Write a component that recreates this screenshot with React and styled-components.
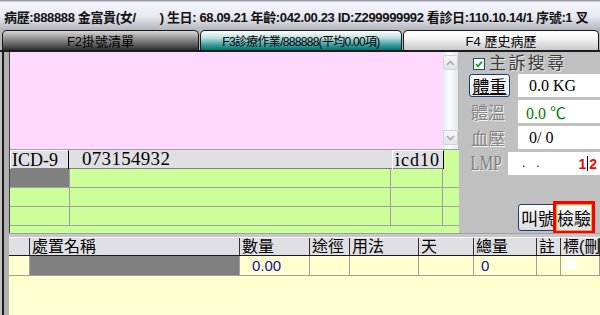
import React from 'react';
import styled, { createGlobalStyle } from 'styled-components';

const SANS = `"Liberation Sans", "Noto Sans CJK TC", sans-serif`;
const SERIF = `"Liberation Serif", "Noto Sans CJK TC", serif`;

const GlobalStyle = createGlobalStyle`
  html, body { margin: 0; padding: 0; background: #c0c0c0; }
  body { width: 600px; height: 315px; overflow: hidden; }
`;

const Page = styled.div`
  width: 600px;
  height: 315px;
  overflow: hidden;
  display: flex;
  flex-direction: column;
  background: #c0c0c0;
  font-family: ${SANS};
`;

const InfoBar = styled.div`
  height: 30px;
  flex: none;
  box-sizing: border-box;
  padding: 2px 0 0 4px;
  display: flex;
  align-items: center;
  background: linear-gradient(#9c9ca6 0, #9c9ca6 1px, #f6f6fe 2px, #e8e8f0 55%, #b4b4bc 100%);
  font-weight: bold;
  font-size: 13px;
  letter-spacing: -0.35px;
  color: #111;
  white-space: nowrap;
  overflow: hidden;
`;

const InfoGap = styled.span`
  display: inline-block;
  width: ${(p) => p.$w}px;
`;

const TabRow = styled.div`
  height: 20px;
  flex: none;
  display: flex;
  align-items: flex-end;
  padding-left: 2px;
  gap: 1px;
  background: #b8b8bc;
`;

const tabBg = {
  dark: 'linear-gradient(#d8d8d8 0%, #9a9a9a 35%, #5a5a5a 75%, #2c2c2c 100%)',
  active: 'linear-gradient(#ffffff 0%, #bfe0e0 35%, #3a9a9a 75%, #007070 100%)',
  light: 'linear-gradient(#ffffff 0%, #f4f4f4 40%, #c8c8c8 100%)',
};

const Tab = styled.div`
  width: ${(p) => p.$w}px;
  height: 20px;
  flex: none;
  box-sizing: border-box;
  display: flex;
  align-items: center;
  justify-content: center;
  font-size: ${(p) => (p.$variant === 'active' ? 12 : 13)}px;
  letter-spacing: ${(p) => (p.$variant === 'active' ? -0.7 : 0)}px;
  color: #000;
  white-space: nowrap;
  overflow: hidden;
  border: 1px solid #1a1a1a;
  border-bottom: none;
  border-radius: 5px 5px 0 0;
  background: ${(p) => tabBg[p.$variant]};
`;

const Workspace = styled.div`
  height: 183px;
  flex: none;
  box-sizing: border-box;
  border-top: 2px solid #1c1c1c;
  display: flex;
`;

const FramePane = styled.div`
  width: ${(p) => p.$w || 'auto'};
  flex: ${(p) => (p.$w ? 'none' : '1')};
  box-sizing: border-box;
  margin-left: 2px;
  border-left: 2px solid #1a1a1a;
  padding-left: 5px;
  background: #b0b0b0;
  display: flex;
`;

const LeftInner = styled.div`
  flex: 1;
  border-left: 1px solid #404040;
  display: flex;
  flex-direction: column;
  background: #ccff99;
  min-width: 0;
`;

const NotesArea = styled.div`
  height: 97px;
  flex: none;
  display: flex;
  border-bottom: 1px solid #a0a0a0;
`;

const PinkMemo = styled.div`
  flex: 1;
  background: #ffd8ff;
`;

const ScrollTrack = styled.div`
  width: 17px;
  flex: none;
  box-sizing: border-box;
  border-right: 1px solid #b8b8c0;
  background: linear-gradient(90deg, #e4e6ec, #fbfbfd 45%, #e6e8ee);
  display: flex;
  flex-direction: column;
  justify-content: space-between;
  align-items: center;
  padding: 3px 0 4px;
`;

const ScrollBtn = styled.div`
  width: 15px;
  height: 15px;
  box-sizing: border-box;
  border: 1px solid #d2d2da;
  border-radius: 2px;
  background: linear-gradient(#f6f6f8, #e4e4e8);
  display: flex;
  align-items: center;
  justify-content: center;
`;

const IcdHeader = styled.div`
  height: 19px;
  flex: none;
  box-sizing: border-box;
  border-bottom: 1px solid #808080;
  display: grid;
  grid-template-columns: 59px 1fr 52px 15px;
  background: #e0e0e4;
  font-family: ${SERIF};
  font-size: 18px;
  line-height: 18px;
  color: #000;
`;

const IcdBox = styled.div`
  box-sizing: border-box;
  border-top: 1px solid #fff;
  border-left: 1px solid #fff;
  border-right: 1px solid #000;
  border-bottom: 1px solid #000;
  padding-left: ${(p) => p.$pad || 1}px;
  letter-spacing: ${(p) => p.$ls || 0}px;
  white-space: nowrap;
`;

const IcdCode = styled.div`
  padding-left: 13px;
  font-size: 19px;
  letter-spacing: 0.3px;
`;

const IcdGap = styled.div`
  background: #ccff99;
`;

const DiagRow = styled.div`
  height: 19px;
  flex: none;
  display: grid;
  grid-template-columns: 60px 321px 52px 1fr;
`;

const DiagCell = styled.div`
  box-sizing: border-box;
  border-bottom: 1px solid #a0a0a0;
  border-right: ${(p) => (p.$last ? 'none' : '1px solid #a0a0a0')};
  background: ${(p) => (p.$selected ? '#808080' : '#ccff99')};
`;

const SidePanel = styled.div`
  flex: 1;
  background: #c0c0c0;
  display: flex;
  flex-direction: column;
  padding: 4px 0 0 10px;
  min-width: 0;
`;

const CheckRow = styled.div`
  height: 15px;
  display: flex;
  align-items: center;
  margin-left: 4px;
  gap: 4px;
`;

const CheckText = styled.span`
  font-family: ${SERIF};
  font-size: 17px;
  letter-spacing: 2.4px;
  color: #3a3a3a;
  text-shadow: 1px 1px 0 #e8e8e8;
  line-height: 15px;
`;

const FieldRow = styled.div`
  height: 23px;
  flex: none;
  display: flex;
  margin-top: 3px;
`;

const LabelCell = styled.div`
  width: ${(p) => p.$w}px;
  flex: none;
  display: flex;
  align-items: center;
`;

const WeightButton = styled.div`
  width: 41px;
  height: 23px;
  box-sizing: border-box;
  border: 1px solid #1c3c78;
  border-radius: 3px;
  background: linear-gradient(#ffffff, #e6e6ea);
  display: flex;
  align-items: center;
  justify-content: center;
  font-size: 17px;
  color: #000;
  text-decoration: underline;
  text-underline-offset: 1px;
`;

const FieldLabel = styled.span`
  display: inline-block;
  font-family: ${SERIF};
  font-size: ${(p) => p.$size || 17}px;
  color: ${(p) => p.$color || '#858585'};
  text-shadow: 1px 1px 0 #f4f4f4;
  padding-left: 2px;
  transform: scaleX(${(p) => p.$sx || 1});
  transform-origin: left center;
`;

const InputBox = styled.div`
  flex: 1;
  background: #fff;
  display: flex;
  align-items: center;
  justify-content: ${(p) => (p.$split ? 'space-between' : 'flex-start')};
  padding-left: ${(p) => p.$pad || 10}px;
  padding-right: 3px;
  font-family: ${SERIF};
  font-size: 16px;
  color: ${(p) => p.$color || '#000'};
  white-space: nowrap;
`;

const Dots = styled.span`
  font-family: ${SANS};
  font-size: 12px;
  letter-spacing: 11px;
  align-self: flex-end;
  padding-bottom: 5px;
`;

const DateTail = styled.span`
  display: flex;
  align-items: center;
  font-family: ${SANS};
  font-weight: bold;
  font-size: 14px;
  color: #ff0000;
`;

const Caret = styled.span`
  width: 1px;
  height: 15px;
  background: #000;
  margin: 0 1px 0 1px;
`;

const ButtonRow = styled.div`
  margin-top: auto;
  height: 33px;
  display: flex;
  align-items: center;
  justify-content: flex-end;
  padding-right: 5px;
  margin-bottom: -1px;
`;

const CallButton = styled.div`
  width: 39px;
  height: 27px;
  box-sizing: border-box;
  border: 1px solid #1c3c78;
  border-radius: 3px;
  background: linear-gradient(#ffffff, #dcdce0);
  display: flex;
  align-items: center;
  padding-left: 2px;
  font-size: 17px;
  color: #000;
  overflow: hidden;
  white-space: nowrap;
`;

const ExamButton = styled.div`
  width: 42px;
  height: 33px;
  box-sizing: border-box;
  border: 3px solid #ff0000;
  margin-left: -4px;
  display: flex;
`;

const ExamInner = styled.div`
  flex: 1;
  box-sizing: border-box;
  border: 1px solid #f0a830;
  background: linear-gradient(#ffffff, #e2e2e6);
  display: flex;
  align-items: center;
  justify-content: center;
  font-size: 17px;
  color: #000;
  white-space: nowrap;
  overflow: hidden;
`;

const OrderPane = styled.div`
  flex: 1;
  display: flex;
  flex-direction: column;
  border-top: 1px solid #a0a0a0;
  padding-top: 3px;
  background: #c8c8cc;
  min-width: 0;
`;

const COLS = '21px 210px 70px 40px 69px 55px 63px 24px 1fr';

const OrderHeader = styled.div`
  height: 19px;
  flex: none;
  box-sizing: border-box;
  display: grid;
  grid-template-columns: ${COLS};
  background: #e0e0e4;
  border-top: 1px solid #f8f8f8;
  border-bottom: 1px solid #1a1a1a;
`;

const HeadCell = styled.div`
  box-sizing: border-box;
  border-right: 1px solid #303030;
  padding-left: 2px;
  font-size: 16px;
  line-height: 18px;
  color: #000;
  white-space: nowrap;
  overflow: hidden;
`;

const OrderBody = styled.div`
  flex: 1;
  background: #ffffd0;
`;

const OrderRow = styled.div`
  height: 20px;
  display: grid;
  grid-template-columns: ${COLS};
`;

const DataCell = styled.div`
  box-sizing: border-box;
  border-right: 1px solid #a0a0a0;
  border-bottom: 1px solid #a0a0a0;
  background: ${(p) => (p.$selected ? '#808080' : 'transparent')};
  padding-left: ${(p) => p.$pad || 0}px;
  font-size: 15px;
  line-height: 19px;
  color: #1010a0;
  white-space: nowrap;
`;

const MarkBox = styled.div`
  width: 11px;
  height: 12px;
  margin: 1px 0 0 4px;
  background: #fff;
`;

const Chevron = ({ up }) => (
  <svg width="9" height="6" viewBox="0 0 9 6">
    <path
      d={up ? 'M1 5 L4.5 1.5 L8 5' : 'M1 1 L4.5 4.5 L8 1'}
      fill="none"
      stroke="#a8a8b0"
      strokeWidth="1.6"
    />
  </svg>
);

const CheckMark = () => (
  <svg width="12" height="12" viewBox="0 0 12 12">
    <rect x="0.5" y="0.5" width="11" height="11" fill="#fff" stroke="#1f4e7a" />
    <path d="M3 6 L5 8.3 L9 3.6" fill="none" stroke="#21a121" strokeWidth="1.8" />
  </svg>
);

export default function App() {
  return (
    <>
      <GlobalStyle />
      <Page>
        <InfoBar>
          病歷:888888 金富貴(女/<InfoGap $w={24} />) 生日: 68.09.21 年齡:042.00.23 ID:Z299999992 看診日:110.10.14/1 序號:1 叉
        </InfoBar>
        <TabRow>
          <Tab $w={197} $variant="dark">F2掛號清單</Tab>
          <Tab $w={202} $variant="active">F3診療作業/888888(平均0.00項)</Tab>
          <Tab $w={196} $variant="light">F4 歷史病歷</Tab>
        </TabRow>
        <Workspace>
          <FramePane $w="457px">
            <LeftInner>
              <NotesArea>
                <PinkMemo />
                <ScrollTrack>
                  <ScrollBtn><Chevron up /></ScrollBtn>
                  <ScrollBtn><Chevron /></ScrollBtn>
                </ScrollTrack>
              </NotesArea>
              <IcdHeader>
                <IcdBox $pad={1}>ICD-9</IcdBox>
                <IcdCode>073154932</IcdCode>
                <IcdBox $pad={2} $ls={1}>icd10</IcdBox>
                <IcdGap />
              </IcdHeader>
              {[0, 1, 2].map((r) => (
                <DiagRow key={r}>
                  <DiagCell $selected={r === 0} />
                  <DiagCell />
                  <DiagCell />
                  <DiagCell $last />
                </DiagRow>
              ))}
            </LeftInner>
          </FramePane>
          <SidePanel>
            <CheckRow>
              <CheckMark />
              <CheckText>主訴搜尋</CheckText>
            </CheckRow>
            <FieldRow>
              <LabelCell $w={49}>
                <WeightButton>體重</WeightButton>
              </LabelCell>
              <InputBox $pad={11}>0.0 KG</InputBox>
            </FieldRow>
            <FieldRow>
              <LabelCell $w={49}>
                <FieldLabel>體溫</FieldLabel>
              </LabelCell>
              <InputBox $pad={8} $color="#008000">0.0 ℃</InputBox>
            </FieldRow>
            <FieldRow>
              <LabelCell $w={49}>
                <FieldLabel>血壓</FieldLabel>
              </LabelCell>
              <InputBox $pad={11}>0/ 0</InputBox>
            </FieldRow>
            <FieldRow>
              <LabelCell $w={39}>
                <FieldLabel $size={20} $sx={0.76} $color="#7c7c7c">LMP</FieldLabel>
              </LabelCell>
              <InputBox $pad={14} $split>
                <Dots>..</Dots>
                <DateTail>1<Caret />2</DateTail>
              </InputBox>
            </FieldRow>
            <ButtonRow>
              <CallButton>叫號</CallButton>
              <ExamButton>
                <ExamInner>檢驗</ExamInner>
              </ExamButton>
            </ButtonRow>
          </SidePanel>
        </Workspace>
        <FramePane>
          <OrderPane>
            <OrderHeader>
              <HeadCell />
              <HeadCell>處置名稱</HeadCell>
              <HeadCell>數量</HeadCell>
              <HeadCell>途徑</HeadCell>
              <HeadCell>用法</HeadCell>
              <HeadCell>天</HeadCell>
              <HeadCell>總量</HeadCell>
              <HeadCell>註</HeadCell>
              <HeadCell>標(刪</HeadCell>
            </OrderHeader>
            <OrderBody>
              <OrderRow>
                <DataCell />
                <DataCell $selected />
                <DataCell $pad={12}>0.00</DataCell>
                <DataCell />
                <DataCell />
                <DataCell />
                <DataCell $pad={7}>0</DataCell>
                <DataCell />
                <DataCell><MarkBox /></DataCell>
              </OrderRow>
            </OrderBody>
          </OrderPane>
        </FramePane>
      </Page>
    </>
  );
}
